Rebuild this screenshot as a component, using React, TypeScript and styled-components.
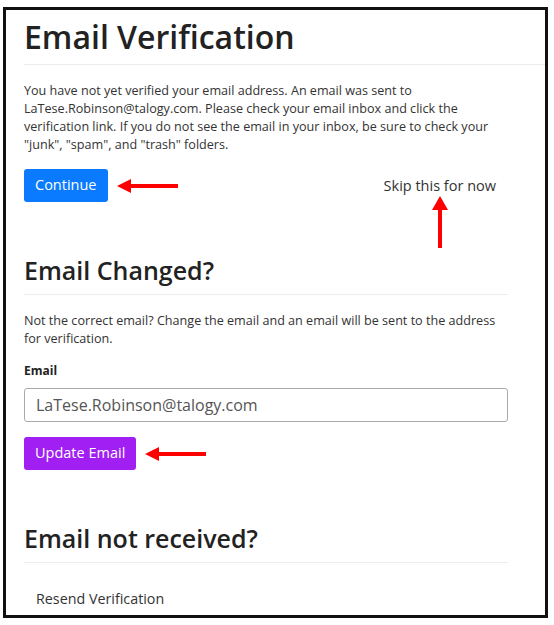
import styled, { createGlobalStyle } from "styled-components";

const GlobalStyle = createGlobalStyle`
  body {
    margin: 0;
    background: #fff;
    font-family: "Open Sans", "Liberation Sans", sans-serif;
    color: #333;
  }
`;

const Frame = styled.div`
  box-sizing: border-box;
  width: 545px;
  height: 611px;
  margin: 7px 0 0 3px;
  border: 3px solid #111;
  padding: 8px 0 0 18px;
  overflow: hidden;
`;

const Title = styled.h1`
  margin: 0;
  font-size: 32px;
  line-height: 38px;
  font-weight: 600;
  color: #222;
`;

const Rule = styled.hr<{ $top?: number }>`
  margin: ${(p) => p.$top ?? 8}px 0 0;
  border: 0;
  border-top: 1px solid #ececec;
`;

const Text = styled.p<{ $top: number; $width?: number }>`
  width: ${(p) => p.$width ?? 484}px;
  margin: ${(p) => p.$top}px 0 0;
  font-size: 12.6px;
  line-height: 18px;
  color: #333;
`;

const ActionRow = styled.div`
  display: flex;
  align-items: center;
  margin-top: 15px;
  width: 484px;
`;

const Button = styled.button<{ $bg: string }>`
  font-family: inherit;
  font-size: 14.5px;
  line-height: 20px;
  color: #fff;
  background: ${(p) => p.$bg};
  border: 0;
  border-radius: 3px;
  padding: 6px 11px 7px;
  cursor: pointer;
`;

const ArrowLeftIcon = styled.svg`
  display: block;
  margin-left: 9px;
`;

const Skip = styled.span`
  position: relative;
  margin-left: auto;
  margin-right: 12px;
  font-size: 14.5px;
  color: #333;
`;

const ArrowUpIcon = styled.svg`
  position: absolute;
  left: 48px;
  top: 20px;
`;

const Section = styled.section<{ $top: number }>`
  width: 484px;
  margin-top: ${(p) => p.$top}px;
`;

const Heading = styled.h2`
  margin: 0;
  font-size: 25px;
  line-height: 30px;
  font-weight: 600;
  color: #222;
`;

const Label = styled.label`
  display: block;
  margin-top: 14px;
  font-size: 12px;
  line-height: 18px;
  font-weight: 700;
  color: #222;
`;

const Input = styled.input`
  display: block;
  box-sizing: border-box;
  width: 484px;
  height: 34px;
  margin-top: 8px;
  padding: 0 11px;
  font-family: inherit;
  font-size: 16px;
  color: #555;
  border: 1px solid #aaa;
  border-radius: 3px;
  outline: none;
`;

const ButtonRow = styled.div`
  display: flex;
  align-items: center;
  margin-top: 15px;
`;

const LinkButton = styled.button`
  display: block;
  margin-top: 26px;
  padding: 0 12px;
  font-family: inherit;
  font-size: 14.3px;
  line-height: 20px;
  color: #333;
  background: none;
  border: 0;
`;

const LeftArrow = () => (
  <ArrowLeftIcon width="61" height="14" viewBox="0 0 61 14">
    <rect x="12" y="5" width="49" height="4" fill="#f00" />
    <polygon points="0,7 14,0 14,14" fill="#f00" />
  </ArrowLeftIcon>
);

export default function App() {
  return (
    <>
      <GlobalStyle />
      <Frame>
        <Title>Email Verification</Title>
        <Rule $top={8} />
        <Text $top={17}>
          You have not yet verified your email address. An email was sent to
          LaTese.Robinson@talogy.com. Please check your email inbox and click
          the verification link. If you do not see the email in your inbox, be
          sure to check your "junk", "spam", and "trash" folders.
        </Text>
        <ActionRow>
          <Button $bg="#0a7bff">Continue</Button>
          <LeftArrow />
          <Skip>
            Skip this for now
            <ArrowUpIcon width="16" height="52" viewBox="0 0 16 52">
              <polygon points="8,0 0,14 16,14" fill="#f00" />
              <rect x="6" y="12" width="4" height="40" fill="#f00" />
            </ArrowUpIcon>
          </Skip>
        </ActionRow>

        <Section $top={53}>
          <Heading>Email Changed?</Heading>
          <Rule $top={9} />
          <Text $top={17} $width={478}>
            Not the correct email? Change the email and an email will be sent to
            the address for verification.
          </Text>
          <Label htmlFor="email">Email</Label>
          <Input id="email" defaultValue="LaTese.Robinson@talogy.com" />
          <ButtonRow>
            <Button $bg="#a11ff2">Update Email</Button>
            <LeftArrow />
          </ButtonRow>
        </Section>

        <Section $top={53}>
          <Heading>Email not received?</Heading>
          <Rule $top={9} />
          <LinkButton>Resend Verification</LinkButton>
        </Section>
      </Frame>
    </>
  );
}
